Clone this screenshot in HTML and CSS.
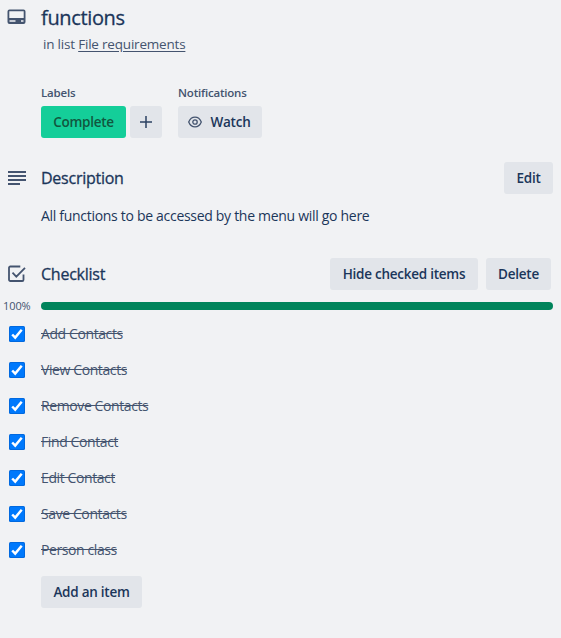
FILE: index.html
```html
<!DOCTYPE html>
<html lang="en">
<head>
<meta charset="utf-8">
<title>functions</title>
<link rel="stylesheet" href="styles.css">
</head>
<body>
<svg class="defs" aria-hidden="true">
  <symbol id="check" viewBox="0 0 16 16">
    <rect width="16" height="16" rx="1.5" fill="#0169df"/>
    <rect x="1" y="1" width="14" height="14" rx="1" fill="#0079fc"/>
    <path d="M3.2 8.500 6.200 11.600 12.700 3.700" fill="none" stroke="#fff" stroke-width="2.500"/>
  </symbol>
</svg>
<main class="card">
  <header class="row title-row">
    <svg class="icon" viewBox="0 0 20 20"><path fill="#44546f" fill-rule="evenodd" d="M2.500 .5H16.500A2 2 0 0 1 18.500 2.500V13A2 2 0 0 1 16.500 15H2.500A2 2 0 0 1 .5 13V2.500A2 2 0 0 1 2.500 .5ZM2.300 2.300V9H16.700V2.300ZM2.500 11.200V12.800H8.500V11.200ZM14 11.200V12.800H16.500V11.200Z"/></svg>
    <h1>functions</h1>
  </header>
  <p class="location">in list <a>File requirements</a></p>

  <section class="meta">
    <div>
      <h3>Labels</h3>
      <div class="controls">
        <span class="btn complete">Complete</span>
        <span class="btn plus"><svg width="12" height="12" viewBox="0 0 12 12"><path d="M6 0V12M0 6H12" stroke="#2c4263" stroke-width="1.500"/></svg></span>
      </div>
    </div>
    <div>
      <h3>Notifications</h3>
      <div class="controls">
        <span class="btn watch"><svg width="14" height="12" viewBox="0 0 14 12" fill="none" stroke="#44546f" stroke-width="1.300"><path d="M.7 6C2 2.800 4.200 1.100 7 1.100S12 2.800 13.300 6C12 9.200 9.800 10.900 7 10.900S2 9.200 .7 6Z"/><circle cx="7" cy="6" r="2.200"/></svg><span>Watch</span></span>
      </div>
    </div>
  </section>

  <section class="row description-row">
    <svg class="icon" viewBox="0 0 20 20"><path d="M1 4H19M1 8H19M1 12H19M1 16H13" stroke="#44546f" stroke-width="2"/></svg>
    <h2>Description</h2>
    <span class="btn edit">Edit</span>
  </section>
  <p class="description">All functions to be accessed by the menu will go here</p>

  <section class="row checklist-row">
    <svg class="icon" viewBox="0 0 20 20"><path d="M13.300 2.500H3.300A1.300 1.300 0 0 0 2 3.800V15.700A1.300 1.300 0 0 0 3.300 17H15.200A1.300 1.300 0 0 0 16.500 15.700V10.500M5.500 8.700 9.300 12.600 18 3.800" fill="none" stroke="#44546f" stroke-width="1.800"/></svg>
    <h2>Checklist</h2>
    <span class="btn hide">Hide checked items</span>
    <span class="btn delete">Delete</span>
  </section>
  <div class="progress"><span class="percent">100%</span><div class="bar"></div></div>

  <ul class="items">
    <li><svg><use href="#check"/></svg><s>Add Contacts</s></li>
    <li><svg><use href="#check"/></svg><s>View Contacts</s></li>
    <li><svg><use href="#check"/></svg><s>Remove Contacts</s></li>
    <li><svg><use href="#check"/></svg><s>Find Contact</s></li>
    <li><svg><use href="#check"/></svg><s>Edit Contact</s></li>
    <li><svg><use href="#check"/></svg><s>Save Contacts</s></li>
    <li><svg><use href="#check"/></svg><s>Person class</s></li>
  </ul>
  <span class="btn add">Add an item</span>
</main>
</body>
</html>
```

FILE: styles.css
```css
* { box-sizing: border-box; }
body {
  margin: 0;
  background: #f1f2f4;
  color: #1b365a;
  font: 14px/20px "Segoe UI", "Open Sans", "Noto Sans", sans-serif;
  white-space: nowrap;
}
h1, h2, h3, p, ul { margin: 0; padding: 0; }
.defs { display: none; }
.card { height: 638px; overflow: hidden; }
.row { display: flex; align-items: center; padding-left: 7px; }
.icon { width: 20px; height: 20px; margin-right: 14px; flex: none; }
.title-row { height: 36px; }
.title-row .icon { margin-top: 2px; }
h1, h2 { -webkit-text-stroke: .3px currentColor; }
h1 { font-size: 20px; line-height: 24px; font-weight: 500; letter-spacing: -.35px; }
.location { height: 20px; margin-top: -2px; padding-left: 43px; color: #44546f; font-size: 13.5px; letter-spacing: -.2px; }
.location a { color: #44546f; text-decoration: underline; text-underline-offset: 2px; }
.meta { display: flex; gap: 16px; margin-top: 29px; padding-left: 41px; }
h3 { height: 20px; margin-bottom: 3px; color: #44546f; font-size: 11.5px; font-weight: 600; letter-spacing: -.2px; }
.controls { display: flex; gap: 4px; }
.btn {
  display: flex;
  align-items: center;
  justify-content: center;
  height: 32px;
  flex: none;
  border-radius: 3px;
  background: #e2e5ea;
  font-size: 13.5px;
  font-weight: 600;
  letter-spacing: -.25px;
}
.complete { width: 85px; background: #14ce99; color: #11573f; }
.plus { width: 32px; }
.watch { width: 84px; gap: 9px; padding-right: 2px; }
.description-row { margin-top: 24px; padding-right: 8px; }
h2 { font-size: 16px; font-weight: 500; letter-spacing: -.25px; flex: 1; }
.edit { width: 49px; }
.description { margin-top: 12px; padding-left: 41px; letter-spacing: -.3px; }
.checklist-row { margin-top: 32px; padding-right: 10px; }
.hide { width: 148px; margin-right: 8px; }
.delete { width: 65px; }
.progress { display: flex; align-items: center; height: 12px; margin-top: 10px; padding: 0 8px 0 3px; }
.percent { width: 38px; color: #44546f; font-size: 11px; letter-spacing: -.1px; }
.bar { flex: 1; height: 8px; border-radius: 4px; background: #00845b; }
.items { list-style: none; margin-top: 4px; }
.items li { display: flex; align-items: center; height: 36px; padding-left: 9px; color: #44546f; letter-spacing: -.4px; }
.items svg { width: 16px; height: 16px; margin-right: 16px; }
.add { width: 101px; margin: 8px 0 0 41px; }
```
